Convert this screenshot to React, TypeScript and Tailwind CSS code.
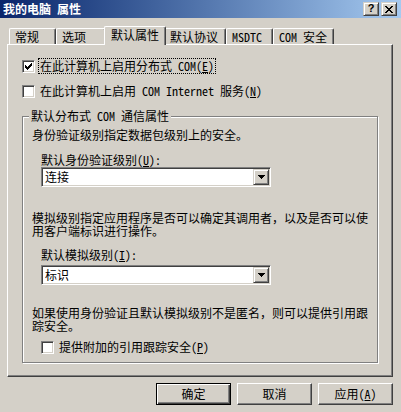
import type { ReactNode } from "react";

const face = "font-['Noto_Sans_Mono_CJK_SC','Noto_Sans_CJK_SC',sans-serif]";

const raised =
  "border border-t-[#D4D0C8] border-l-[#D4D0C8] border-r-[#404040] border-b-[#404040] shadow-[inset_1px_1px_0_white,inset_-1px_-1px_0_#808080]";
const sunken =
  "border border-t-[#808080] border-l-[#808080] border-r-white border-b-white shadow-[inset_1px_1px_0_#404040,inset_-1px_-1px_0_#D4D0C8]";

function CheckBox({ checked }: { checked?: boolean }) {
  return (
    <span className={`w-[13px] h-[13px] shrink-0 bg-white flex items-center justify-center ${sunken}`}>
      {checked && (
        <svg width="7" height="7" viewBox="0 0 7 7" shapeRendering="crispEdges">
          <rect x="6" y="0" width="1" height="1" />
          <rect x="5" y="1" width="2" height="1" />
          <rect x="0" y="2" width="1" height="1" />
          <rect x="4" y="2" width="3" height="1" />
          <rect x="0" y="3" width="2" height="1" />
          <rect x="3" y="3" width="3" height="1" />
          <rect x="0" y="4" width="5" height="1" />
          <rect x="1" y="5" width="3" height="1" />
          <rect x="2" y="6" width="1" height="1" />
        </svg>
      )}
    </span>
  );
}

function Option({ checked, focus, children }: { checked?: boolean; focus?: boolean; children: ReactNode }) {
  return (
    <div className="flex items-center h-[16px]">
      <CheckBox checked={checked} />
      <span
        className={`ml-[3px] pl-[1px] pr-[1px] leading-[14px] border ${
          focus ? "border-dotted border-black" : "border-transparent"
        }`}
      >
        {children}
      </span>
    </div>
  );
}

function Combo({ value }: { value: string }) {
  return (
    <div className={`w-[230px] h-[20px] bg-white p-[1px] flex ${sunken}`}>
      <div className="flex-1 pl-[2px] leading-[16px]">{value}</div>
      <div className={`w-[16px] h-[16px] bg-[#D4D0C8] flex items-center justify-center ${raised}`}>
        <svg width="7" height="4" viewBox="0 0 7 4" shapeRendering="crispEdges">
          <path d="M0 0h7v1H0zM1 1h5v1H1zM2 2h3v1H2zM3 3h1v1H3z" fill="black" />
        </svg>
      </div>
    </div>
  );
}

function Tab({ label, w, active }: { label: string; w: string; active?: boolean }) {
  const edge =
    "border-t border-l border-r border-t-white border-l-white border-r-[#404040] rounded-tl-[2px] rounded-tr-[2px] shadow-[inset_-1px_0_0_#808080] whitespace-nowrap";
  if (active)
    return (
      <div className={`${w} h-[19px] -mx-[2px] relative z-10 bg-[#D4D0C8] pl-[6px] pt-[1px] leading-[14px] ${edge}`}>
        {label}
      </div>
    );
  return <div className={`${w} h-[16px] mt-[2px] pl-[5px] pt-[1px] leading-[14px] ${edge}`}>{label}</div>;
}

function Button({ children, primary }: { children: ReactNode; primary?: boolean }) {
  const cls = primary
    ? "border border-black shadow-[inset_1px_1px_0_white,inset_-1px_-1px_0_#404040,inset_-2px_-2px_0_#808080]"
    : "border border-t-white border-l-white border-r-[#404040] border-b-[#404040] shadow-[inset_-1px_-1px_0_#808080]";
  return (
    <button className={`w-[75px] h-[22px] bg-[#D4D0C8] flex items-center justify-center leading-[14px] ${cls}`}>
      {children}
    </button>
  );
}

export default function App() {
  return (
    <div className={`w-[401px] h-[412px] bg-[#D4D0C8] text-black text-[12px] overflow-hidden flex flex-col ${face}`}>
      <div className="h-[18px] shrink-0 bg-gradient-to-r from-[#0A246A] to-[#A6CAF0] flex items-center justify-between pl-[3px] pr-[4px]">
        <span className="text-white font-bold leading-[14px]">我的电脑 属性</span>
        <div className="flex gap-[2px]">
          <div className={`w-[16px] h-[14px] bg-[#D4D0C8] flex items-center justify-center ${raised}`}>
            <span className="font-['Liberation_Sans',sans-serif] font-bold text-[11px] leading-[11px] -mt-px">?</span>
          </div>
          <div className={`w-[16px] h-[14px] bg-[#D4D0C8] flex items-center justify-center ${raised}`}>
            <svg width="8" height="7" viewBox="0 0 8 7" shapeRendering="crispEdges">
              <path
                d="M0 0h2v1H0zM6 0h2v1H6zM1 1h2v1H1zM5 1h2v1H5zM2 2h4v1H2zM3 3h2v1H3zM2 4h4v1H2zM1 5h2v1H1zM5 5h2v1H5zM0 6h2v1H0zM6 6h2v1H6z"
                fill="black"
              />
            </svg>
          </div>
        </div>
      </div>

      <div className="mt-[8px] ml-[7px] pl-[2px] h-[18px] flex items-start relative z-10">
        <Tab label="常规" w="w-[47px]" />
        <Tab label="选项" w="w-[50px]" />
        <Tab label="默认属性" w="w-[62px]" active />
        <Tab label="默认协议" w="w-[62px]" />
        <Tab label="MSDTC" w="w-[47px]" />
        <Tab label="COM 安全" w="w-[61px]" />
      </div>

      <div className="ml-[7px] w-[386px] h-[333px] shrink-0 border border-t-white border-l-white border-r-[#404040] border-b-[#404040] shadow-[inset_-1px_-1px_0_#808080] pl-[14px] pt-[13px]">
        <Option checked focus>
          在此计算机上启用分布式 COM(<u>E</u>)
        </Option>
        <div className="mt-[9px]">
          <Option>
            在此计算机上启用 COM Internet 服务(<u>N</u>)
          </Option>
        </div>

        <div className="mt-[17px] w-[356px] h-[247px] relative border border-[#808080] shadow-[1px_1px_0_white,inset_1px_1px_0_white] pl-[9px] pt-[11px]">
          <span className="absolute -top-[8px] left-[6px] px-[2px] bg-[#D4D0C8] leading-[14px]">默认分布式 COM 通信属性</span>
          <p className="leading-[14px]">身份验证级别指定数据包级别上的安全。</p>
          <div className="ml-[9px]">
            <p className="mt-[11px] leading-[14px]">
              默认身份验证级别(<u>U</u>):
            </p>
            <Combo value="连接" />
          </div>
          <p className="mt-[24px] leading-[13px]">
            模拟级别指定应用程序是否可以确定其调用者，以及是否可以使
            <br />
            用客户端标识进行操作。
          </p>
          <div className="ml-[9px]">
            <p className="mt-[11px] leading-[14px]">
              默认模拟级别(<u>I</u>):
            </p>
            <div className="mt-[3px]">
              <Combo value="标识" />
            </div>
          </div>
          <p className="mt-[21px] leading-[13px]">
            如果使用身份验证且默认模拟级别不是匿名，则可以提供引用跟
            <br />
            踪安全。
          </p>
          <div className="mt-[7px] ml-[9px]">
            <Option>
              提供附加的引用跟踪安全(<u>P</u>)
            </Option>
          </div>
        </div>
      </div>

      <div className="mt-[6px] pr-[8px] flex justify-end gap-[6px]">
        <Button primary>确定</Button>
        <Button>取消</Button>
        <Button>
          应用(<u>A</u>)
        </Button>
      </div>
    </div>
  );
}
